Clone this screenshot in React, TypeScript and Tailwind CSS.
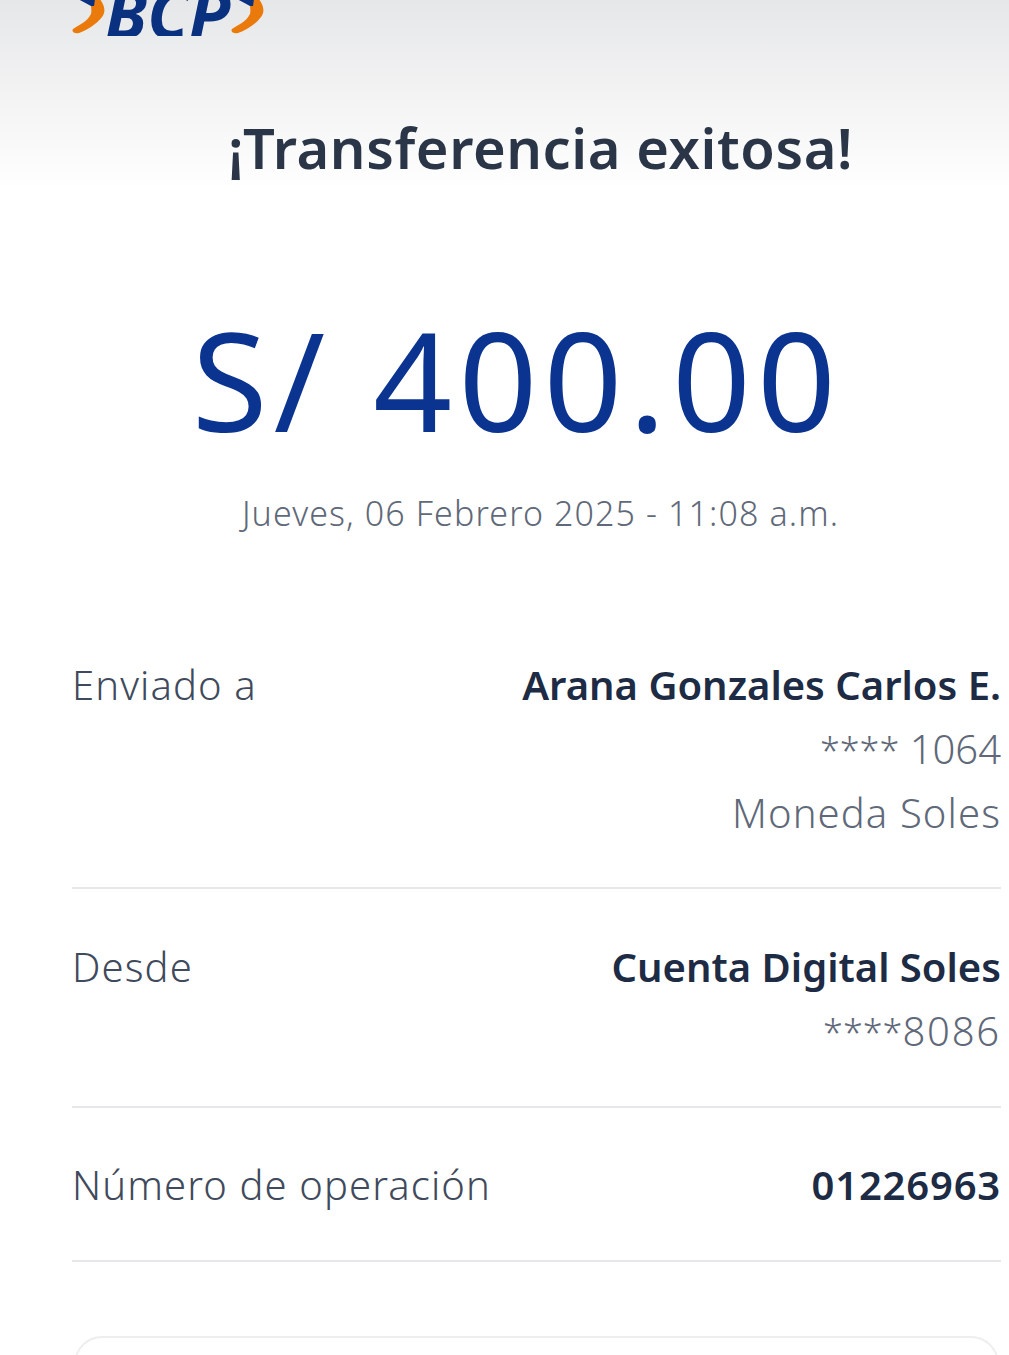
import React from "react";

const font = { fontFamily: '"Noto Sans", sans-serif' };

const Chevron = () => (
  <svg width="36" height="36" viewBox="0 0 36 36" className="shrink-0">
    <path d="M17 -2 L28 -2 C34 5 35 12 31 17 C26 24 16 30 8 33 C4 34 0 32 2 29 C8 25 16 22 20 14 C21 9 20 4 17 -2 Z" fill="#ea7a0b" />
    <path d="M7 -1 L24 -1 L23 6 L20 6 Z" fill="#0a3080" />
  </svg>
);

const Stars = () => <span className="text-[36px] leading-none">****</span>;

const Row = ({ label, title, children, className, titleClass = "" }: { label: string; title: string; children?: React.ReactNode; className: string; titleClass?: string }) => (
  <div className={`flex justify-between border-b-2 border-[#e6e7e9] ${className}`}>
    <div className="text-[40px] leading-[64px] font-[350] text-[#3f4a5c] tracking-[1.1px]">{label}</div>
    <div className="text-right">
      <div className={`text-[40px] leading-[64px] font-semibold text-[#1d2b44] ${titleClass}`}>{title}</div>
      {children}
    </div>
  </div>
);

const Line = ({ children, className = "" }: { children: React.ReactNode; className?: string }) => (
  <div className={`text-[40px] leading-[64px] font-[350] text-[#5f6979] ${className}`}>{children}</div>
);

export default function App() {
  return (
    <div className="w-[1009px] h-[1355px] overflow-hidden bg-white" style={font}>
      <div className="h-[190px] bg-gradient-to-b from-[#e6e7e8] to-white">
        <div className="flex items-start h-[36px] pl-[71px] overflow-hidden">
          <Chevron />
          <span className="text-[68px] leading-[36px] -mt-[5px] -ml-[2px] font-bold italic text-[#0a3080] w-[125px] shrink-0">BCP</span>
          <Chevron />
        </div>
        <h1 className="mt-[75px] text-center text-[56px] leading-[72px] font-semibold tracking-[0.6px] text-[#2a3547] pl-[72px]">¡Transferencia exitosa!</h1>
      </div>
      <div className="pl-[72px] pr-2">
        <div className="mt-[113px] text-center text-[138px] leading-[150px] tracking-[6.2px] text-[#0b3491] pr-[39px]">S/ 400.00</div>
        <div className="mt-[36px] text-center text-[34px] leading-[48px] font-[350] tracking-[1.1px] text-[#5f6979] pl-[8px]">Jueves, 06 Febrero 2025 - 11:08 a.m.</div>
        <Row className="mt-[116px] pb-[42px]" label="Enviado a" title="Arana Gonzales Carlos E.">
          <Line><Stars /> 1064</Line>
          <Line className="tracking-[1.1px]">Moneda Soles</Line>
        </Row>
        <Row className="mt-[46px] pb-[43px]" label="Desde" title="Cuenta Digital Soles">
          <Line><Stars /><span className="tracking-[1.8px]">8086</span></Line>
        </Row>
        <Row className="mt-[45px] pb-[43px]" label="Número de operación" title="01226963" titleClass="tracking-[0.8px]" />
        <div className="mt-[74px] h-[60px] border-2 border-[#eeeeef] rounded-[28px] mx-[2px]" />
      </div>
    </div>
  );
}
